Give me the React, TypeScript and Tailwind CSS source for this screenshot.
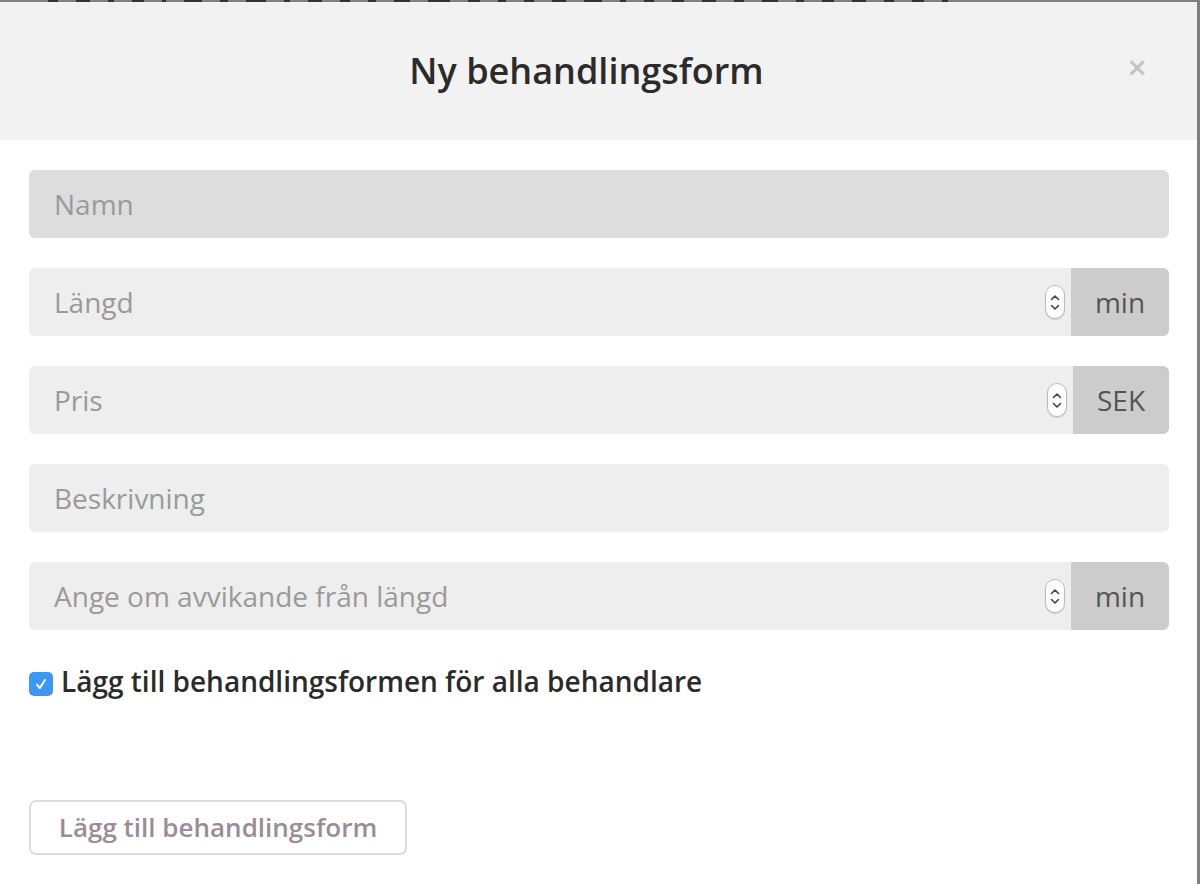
import React from "react";

function Spinner() {
  return (
    <div className="w-[20px] h-[34px] rounded-full bg-white border border-[#bdbdbd] shadow-[0_1px_1px_rgba(0,0,0,0.15)] flex flex-col items-center justify-center gap-[3px] shrink-0">
      <svg width="10" height="7" viewBox="0 0 10 7" fill="none">
        <path d="M1.5 5.5 L5 2 L8.5 5.5" stroke="#444" strokeWidth="1.6" strokeLinecap="round" strokeLinejoin="round" />
      </svg>
      <svg width="10" height="7" viewBox="0 0 10 7" fill="none">
        <path d="M1.5 1.5 L5 5 L8.5 1.5" stroke="#444" strokeWidth="1.6" strokeLinecap="round" strokeLinejoin="round" />
      </svg>
    </div>
  );
}

function Field({ placeholder, addon, addonW, dark }: { placeholder: string; addon?: string; addonW?: string; dark?: boolean }) {
  return (
    <div className="flex h-[68px] rounded-[6px] overflow-hidden">
      <div className={`flex-1 flex items-center pl-[25px] pr-[6px] ${dark ? "bg-[#dddddd]" : "bg-[#eeeeee]"}`}>
        <input
          placeholder={placeholder}
          className="flex-1 min-w-0 bg-transparent outline-none text-[28px] text-[#555] placeholder:text-[#9a9a9a]"
        />
        {addon && <Spinner />}
      </div>
      {addon && (
        <div className={`${addonW} bg-[#cccccc] flex items-center justify-center text-[28px] text-[#555]`}>{addon}</div>
      )}
    </div>
  );
}

export default function App() {
  return (
    <div className="w-[1200px] h-[884px] bg-[#808080] flex overflow-hidden" style={{ fontFamily: '"Open Sans", sans-serif' }}>
      <div className="w-[1197px] flex flex-col">
        <div className="h-[2px] overflow-hidden relative">
          <div className="absolute left-[48px] bottom-0 flex gap-[18px] h-[2px]">
            {[10, 14, 6, 12, 4, 18, 8, 20, 6, 14, 10, 8, 16, 22, 12, 8, 10, 14, 18, 6, 10, 12, 14, 10, 16, 8, 12, 14, 10, 12, 6].map((w, i) => (
              <div key={i} className="h-[2px] bg-[#333]" style={{ width: w }} />
            ))}
          </div>
        </div>
        <div className="flex-1 bg-white flex flex-col">
          <div className="h-[138px] bg-[#f2f2f2] relative flex items-center justify-center pr-[24px]">
            <h1 className="text-[36px] font-semibold text-[#2b2b2b]">Ny behandlingsform</h1>
            <span className="absolute right-[50px] top-[48px] text-[34px] leading-none text-[#c4c4c4] font-semibold">×</span>
          </div>
          <div className="pl-[29px] pr-[28px] pt-[30px] flex flex-col gap-[30px]">
            <Field placeholder="Namn" dark />
            <Field placeholder="Längd" addon="min" addonW="w-[98px]" />
            <Field placeholder="Pris" addon="SEK" addonW="w-[96px]" />
            <Field placeholder="Beskrivning" />
            <Field placeholder="Ange om avvikande från längd" addon="min" addonW="w-[98px]" />
          </div>
          <div className="pl-[29px] mt-[34px] flex items-center gap-[8px] h-[34px]">
            <div className="w-[24px] h-[24px] rounded-[5px] bg-[#3d97f5] flex items-center justify-center mt-[6px]">
              <svg width="16" height="16" viewBox="0 0 14 14" fill="none">
                <path d="M3.5 7.5 L6 10.5 L10.5 3.5" stroke="white" strokeWidth="1.8" strokeLinecap="round" strokeLinejoin="round" />
              </svg>
            </div>
            <span className="text-[28px] leading-[34px] font-semibold text-[#2b2b2b]">Lägg till behandlingsformen för alla behandlare</span>
          </div>
          <div className="pl-[29px] mt-[102px]">
            <button className="w-[378px] h-[55px] border-2 border-[#dcdcdc] rounded-[7px] bg-white text-[26px] font-semibold text-[#9b8c97]">
              Lägg till behandlingsform
            </button>
          </div>
        </div>
      </div>
    </div>
  );
}
